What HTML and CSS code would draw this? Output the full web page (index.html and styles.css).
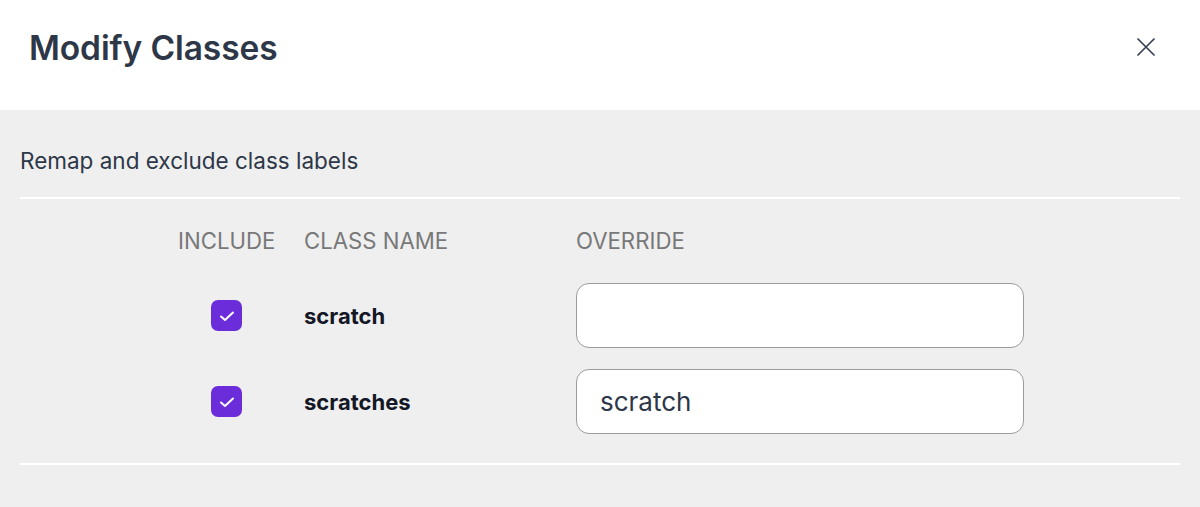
FILE: index.html
```html
<!DOCTYPE html>
<html lang="en">
<head>
<meta charset="utf-8">
<title>Modify Classes</title>
<link rel="stylesheet" href="styles.css">
</head>
<body>
<div class="modal">
  <header class="modal-header">
    <h1 class="modal-title">Modify Classes</h1>
    <button class="close-btn" aria-label="Close">
      <svg width="18" height="18" viewBox="0 0 18 18" fill="none" stroke="#374151" stroke-width="1.7" stroke-linecap="round"><path d="M1 1L17 17M17 1L1 17"/></svg>
    </button>
  </header>
  <section class="modal-body">
    <p class="subtitle">Remap and exclude class labels</p>
    <div class="divider"></div>
    <div class="class-table">
      <div class="th th-include">INCLUDE</div>
      <div class="th">CLASS NAME</div>
      <div class="th">OVERRIDE</div>

      <div class="cell cell-include"><span class="checkbox"><svg width="18" height="18" viewBox="0 0 18 18" fill="none" stroke="#fff" stroke-width="2" stroke-linecap="round" stroke-linejoin="round"><path d="M3 9.5L7 13L15 5.5"/></svg></span></div>
      <div class="cell class-name">scratch</div>
      <div class="cell"><div class="override-input"></div></div>

      <div class="cell cell-include"><span class="checkbox"><svg width="18" height="18" viewBox="0 0 18 18" fill="none" stroke="#fff" stroke-width="2" stroke-linecap="round" stroke-linejoin="round"><path d="M3 9.5L7 13L15 5.5"/></svg></span></div>
      <div class="cell class-name">scratches</div>
      <div class="cell"><div class="override-input">scratch</div></div>
    </div>
    <div class="divider"></div>
  </section>
</div>
</body>
</html>
```
FILE: styles.css
```css
* { box-sizing: border-box; }
html, body {
  margin: 0;
  padding: 0;
  height: 100%;
}
body {
  font-family: Inter, "Noto Sans", "Liberation Sans", sans-serif;
  background: #efefef;
  color: #2d3748;
}
.modal {
  display: flex;
  flex-direction: column;
  min-height: 100%;
}
.modal-header {
  height: 110px;
  background: #ffffff;
  display: flex;
  align-items: center;
  justify-content: space-between;
  padding: 0 45px 0 29px;
}
.modal-title {
  margin: 0 0 14px 0;
  font-size: 33.5px;
  font-weight: 600;
  color: #2d3748;
  letter-spacing: -0.1px;
}
.close-btn {
  background: none;
  border: none;
  padding: 0;
  margin-bottom: 16px;
  display: flex;
  cursor: pointer;
}
.modal-body {
  flex: 1;
  background: #efefef;
  padding: 36px 20px 0 20px;
}
.subtitle {
  margin: 0;
  font-size: 22.5px;
  line-height: 30px;
  color: #2d3748;
}
.divider {
  height: 2px;
  background: #ffffff;
  margin-top: 21px;
}
.class-table {
  display: grid;
  grid-template-columns: 97px 243px 448px;
  column-gap: 29px;
  padding: 27px 0 29px 158px;
  row-gap: 21px;
  align-items: center;
}
.class-table + .divider { margin-top: 0; }
.th {
  font-size: 22.2px;
  line-height: 30px;
  color: #787878;
  white-space: nowrap;
  margin-bottom: 6px;
}
.th-include { text-align: center; }
.cell { display: flex; align-items: center; }
.cell-include { justify-content: center; }
.checkbox {
  width: 31px;
  height: 31px;
  border-radius: 7px;
  background: #6b2cda;
  display: flex;
  align-items: center;
  justify-content: center;
}
.class-name {
  font-size: 22px;
  font-weight: 700;
  color: #141726;
}
.override-input {
  width: 448px;
  height: 65px;
  background: #ffffff;
  border: 1.5px solid #9c9c9c;
  border-radius: 13px;
  padding-left: 23px;
  display: flex;
  align-items: center;
  font-size: 26px;
  color: #2d3748;
}
```
